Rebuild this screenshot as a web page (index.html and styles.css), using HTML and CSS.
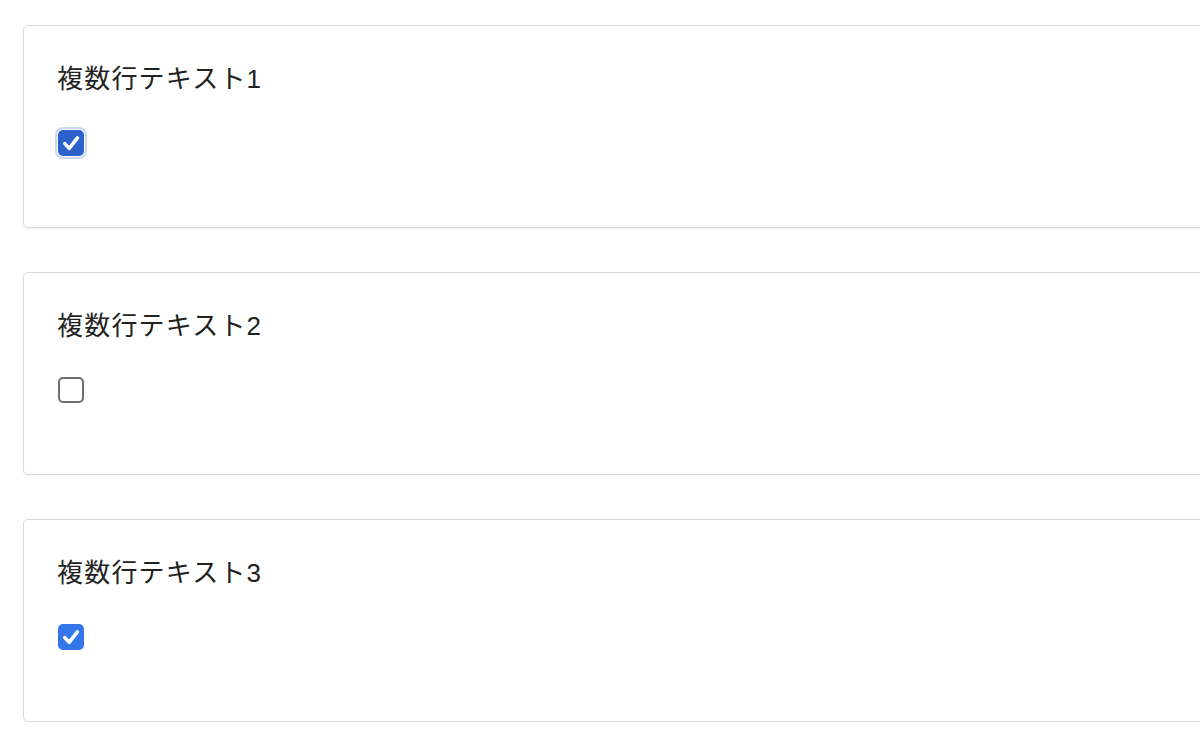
FILE: index.html
```html
<!DOCTYPE html>
<html lang="ja">
<head>
    <meta charset="UTF-8">
    <meta name="viewport" content="width=device-width, initial-scale=1.0">
    <title>複数行テキスト</title>
    <link rel="stylesheet" href="styles.css">
</head>
<body>
    <div class="form">
        <div class="card">
            <div class="card-label">複数行テキスト1</div>
            <label class="check">
                <input type="checkbox" checked>
                <span class="box box-focus">
                    <svg viewBox="0 0 26 26" width="26" height="26"><path d="M6.8 13.6l4.4 4.8 8.2-10.6" fill="none" stroke="#fff" stroke-width="3.6" stroke-linecap="round" stroke-linejoin="round"/></svg>
                </span>
            </label>
        </div>

        <div class="card">
            <div class="card-label">複数行テキスト2</div>
            <label class="check">
                <input type="checkbox">
                <span class="box"></span>
            </label>
        </div>

        <div class="card">
            <div class="card-label">複数行テキスト3</div>
            <label class="check">
                <input type="checkbox" checked>
                <span class="box">
                    <svg viewBox="0 0 26 26" width="26" height="26"><path d="M6.8 13.6l4.4 4.8 8.2-10.6" fill="none" stroke="#fff" stroke-width="3.6" stroke-linecap="round" stroke-linejoin="round"/></svg>
                </span>
            </label>
        </div>
    </div>
</body>
</html>
```

FILE: styles.css
```css
body {
    font-family: "Liberation Sans", "Noto Sans CJK JP", sans-serif;
    margin: 0;
    background: #fff;
    color: #222;
    overflow: hidden;
}
.form {
    display: flex;
    flex-direction: column;
    gap: 44px;
    padding: 25px 0 0 23px;
    width: 1250px;
}
.card {
    height: 203px;
    box-sizing: border-box;
    border: 1px solid #dadada;
    border-radius: 5px;
    box-shadow: 0 1px 2px rgba(0,0,0,0.06);
    padding: 33px 33px 32px;
}
.card-label {
    font-size: 26px;
    line-height: 40px;
    letter-spacing: 1.2px;
    margin-bottom: 31px;
}
.check {
    display: inline-block;
    margin-left: 1px;
    cursor: pointer;
}
.check input {
    position: absolute;
    opacity: 0;
    width: 0;
    height: 0;
}
.box {
    display: block;
    width: 26px;
    height: 26px;
    box-sizing: border-box;
    border: 2px solid #6e6e6e;
    border-radius: 5px;
    background: #fff;
}
.box svg {
    display: block;
    margin: -2px;
}
.check input:checked + .box {
    background: #3475ea;
    border-color: #3475ea;
}
.check input:checked + .box-focus {
    background: #2b62cc;
    border-color: #2b62cc;
    outline: 2px solid rgba(80,130,210,0.3);
    outline-offset: 1px;
}
```
